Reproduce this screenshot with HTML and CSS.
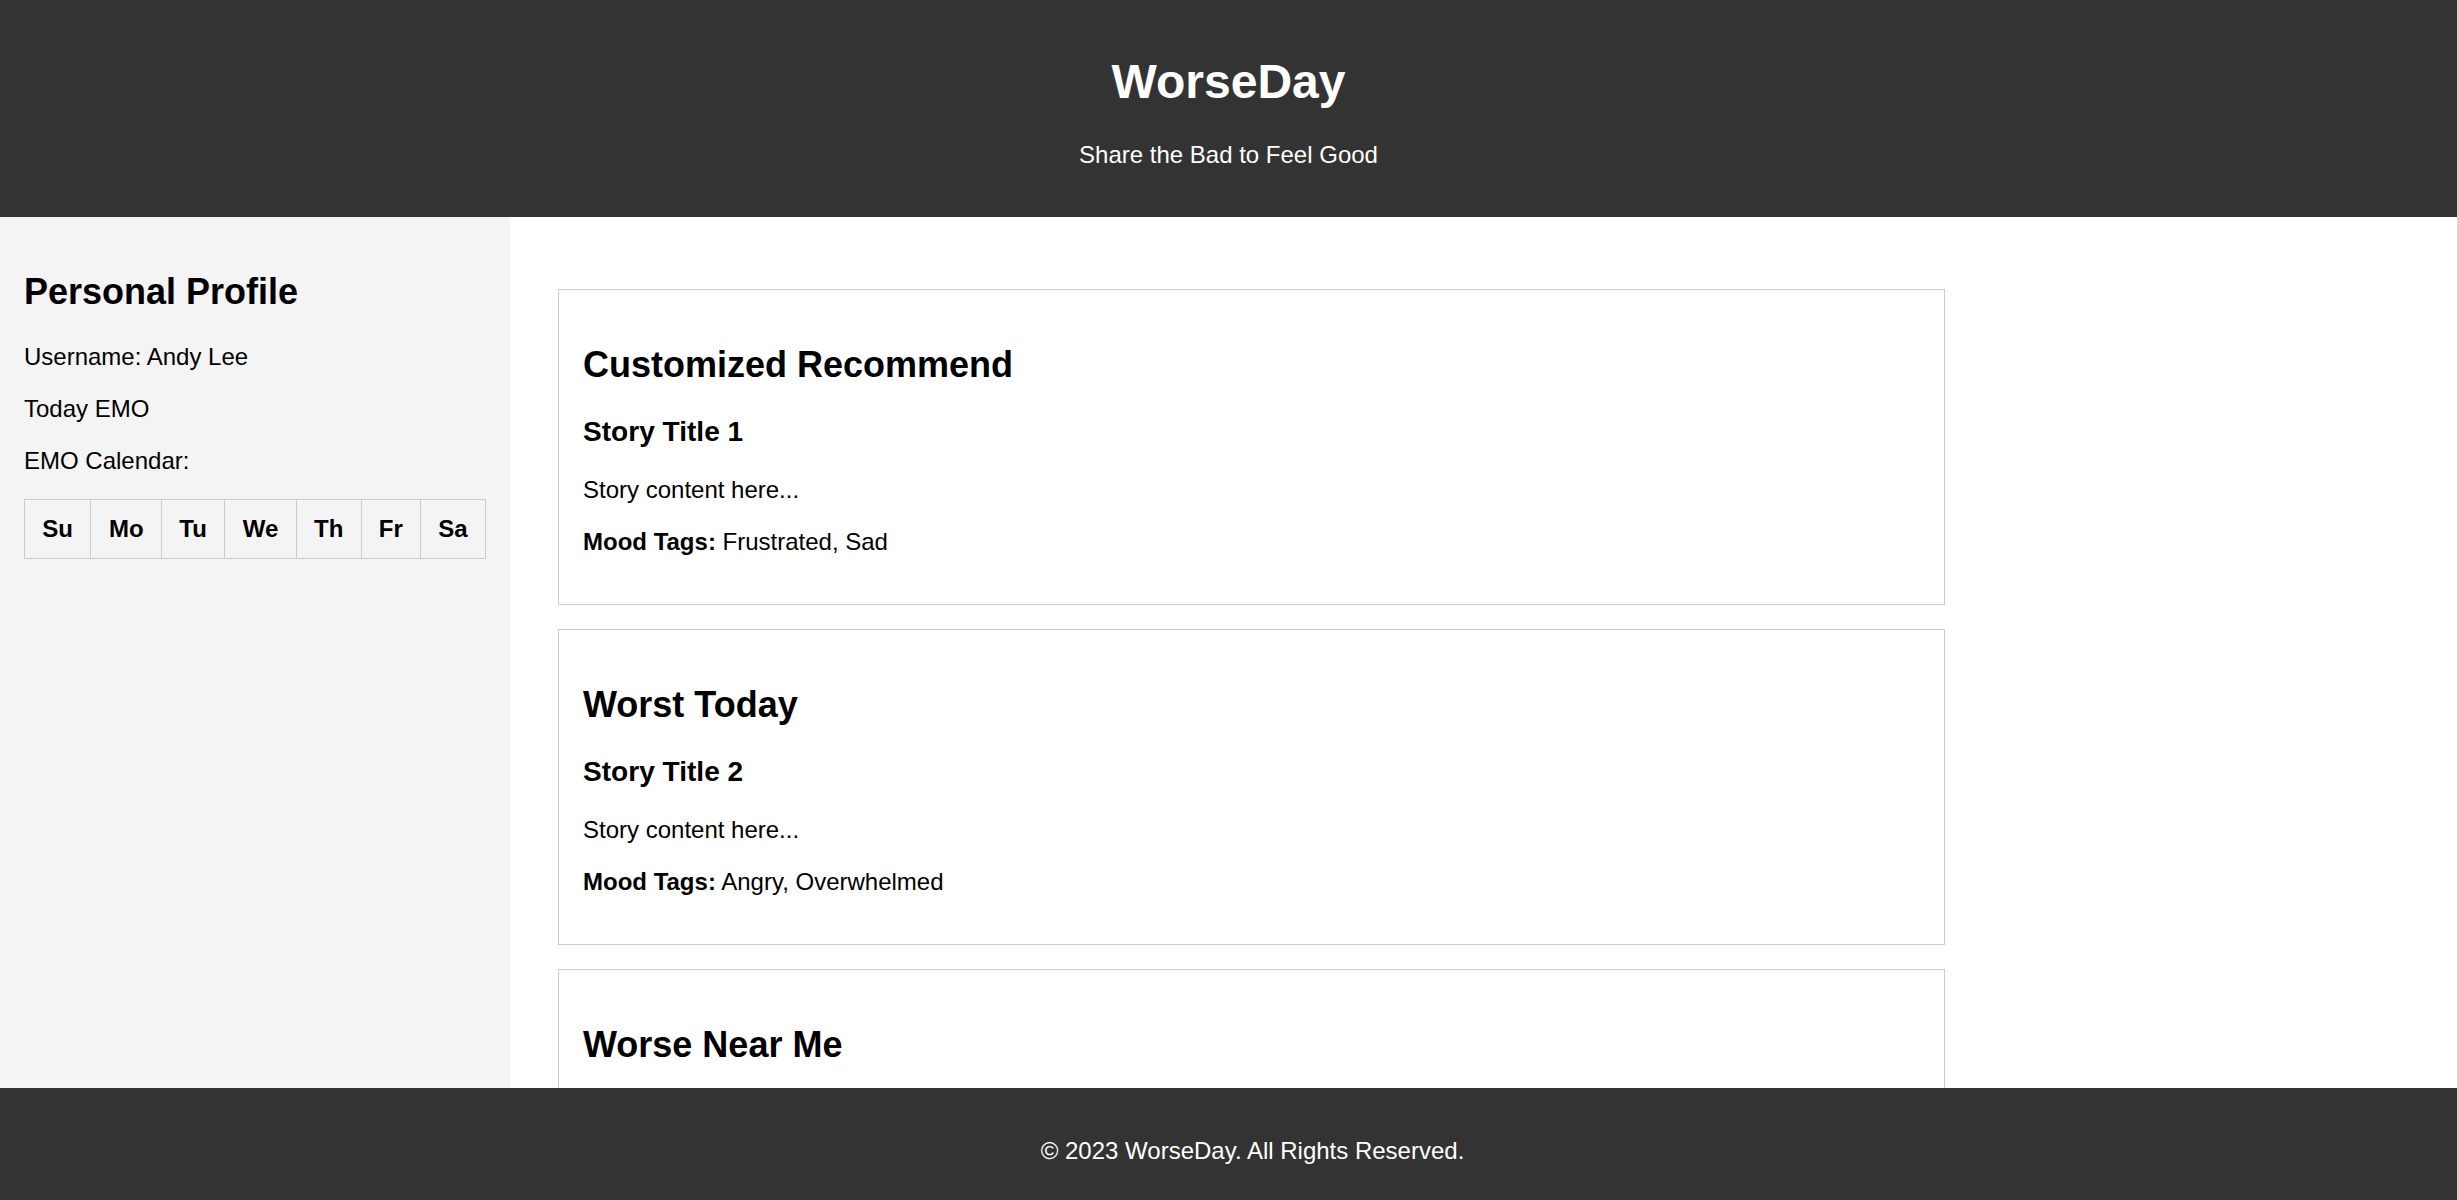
FILE: index.html
```html
<!DOCTYPE html>
<html lang="en">
<head>
<meta charset="utf-8">
<title>WorseDay</title>
<link rel="stylesheet" href="styles.css">
</head>
<body>
<header class="site-header">
  <h1 class="site-title">WorseDay</h1>
  <p class="site-tagline">Share the Bad to Feel Good</p>
</header>
<div class="layout">
  <aside class="sidebar">
    <h2 class="sidebar-title">Personal Profile</h2>
    <p class="sidebar-text">Username: Andy Lee</p>
    <p class="sidebar-text">Today EMO</p>
    <p class="sidebar-text">EMO Calendar:</p>
    <table class="calendar">
      <thead>
        <tr>
          <th>Su</th><th>Mo</th><th>Tu</th><th>We</th><th>Th</th><th>Fr</th><th>Sa</th>
        </tr>
      </thead>
    </table>
  </aside>
  <main class="main">
    <section class="card">
      <h2 class="card-title">Customized Recommend</h2>
      <div class="story">
        <h3 class="story-title">Story Title 1</h3>
        <p class="story-text">Story content here...</p>
        <p class="story-text"><strong>Mood Tags:</strong> Frustrated, Sad</p>
      </div>
    </section>
    <section class="card">
      <h2 class="card-title">Worst Today</h2>
      <div class="story">
        <h3 class="story-title">Story Title 2</h3>
        <p class="story-text">Story content here...</p>
        <p class="story-text"><strong>Mood Tags:</strong> Angry, Overwhelmed</p>
      </div>
    </section>
    <section class="card card-last">
      <h2 class="card-title">Worse Near Me</h2>
    </section>
  </main>
</div>
<footer class="site-footer">
  <p class="footer-text">&copy; 2023 WorseDay. All Rights Reserved.</p>
</footer>
</body>
</html>
```

FILE: styles.css
```css
html, body {
  margin: 0;
  padding: 0;
}

body {
  font-family: "Liberation Sans", Arial, sans-serif;
  font-size: 24px;
  color: #000;
  background: #fff;
  height: 100vh;
  overflow: hidden;
  display: flex;
  flex-direction: column;
}

.site-header {
  flex-shrink: 0;
  height: 217px;
  box-sizing: border-box;
  padding-top: 21.5px;
  background: #333;
  color: #fff;
  text-align: center;
}

.site-title {
  font-size: 48px;
  font-weight: bold;
  margin: 32.16px 0;
}

.site-tagline {
  font-size: 24px;
  margin: 24px 0;
}

.layout {
  flex: 1;
  min-height: 0;
  display: flex;
  overflow: hidden;
}

.sidebar {
  width: 510px;
  flex-shrink: 0;
  box-sizing: border-box;
  padding: 24px;
  background: #f4f4f4;
}

.sidebar-title {
  font-size: 36px;
  margin: 29.88px 0;
}

.sidebar-text {
  margin: 24px 0;
}

.calendar {
  width: 100%;
  border-collapse: collapse;
}

.calendar th {
  border: 1px solid #ccc;
  padding: 15px;
  font-weight: bold;
  text-align: center;
}

.main {
  flex: 1;
  min-width: 0;
  padding: 72px 0 0 48px;
  overflow: hidden;
}

.card {
  width: 1387px;
  box-sizing: border-box;
  border: 1px solid #ccc;
  padding: 24px;
  margin-bottom: 24px;
  background: #fff;
}

.card-last {
  min-height: 320px;
}

.card-title {
  font-size: 36px;
  margin: 29.88px 0;
}

.story-title {
  font-size: 28.08px;
  margin: 28.08px 0;
}

.story-text {
  margin: 24px 0;
}

.site-footer {
  flex-shrink: 0;
  height: 112px;
  box-sizing: border-box;
  padding: 48.5px 0 0 48px;
  background: #333;
  color: #fff;
  text-align: center;
}

.footer-text {
  margin: 0;
}
```
